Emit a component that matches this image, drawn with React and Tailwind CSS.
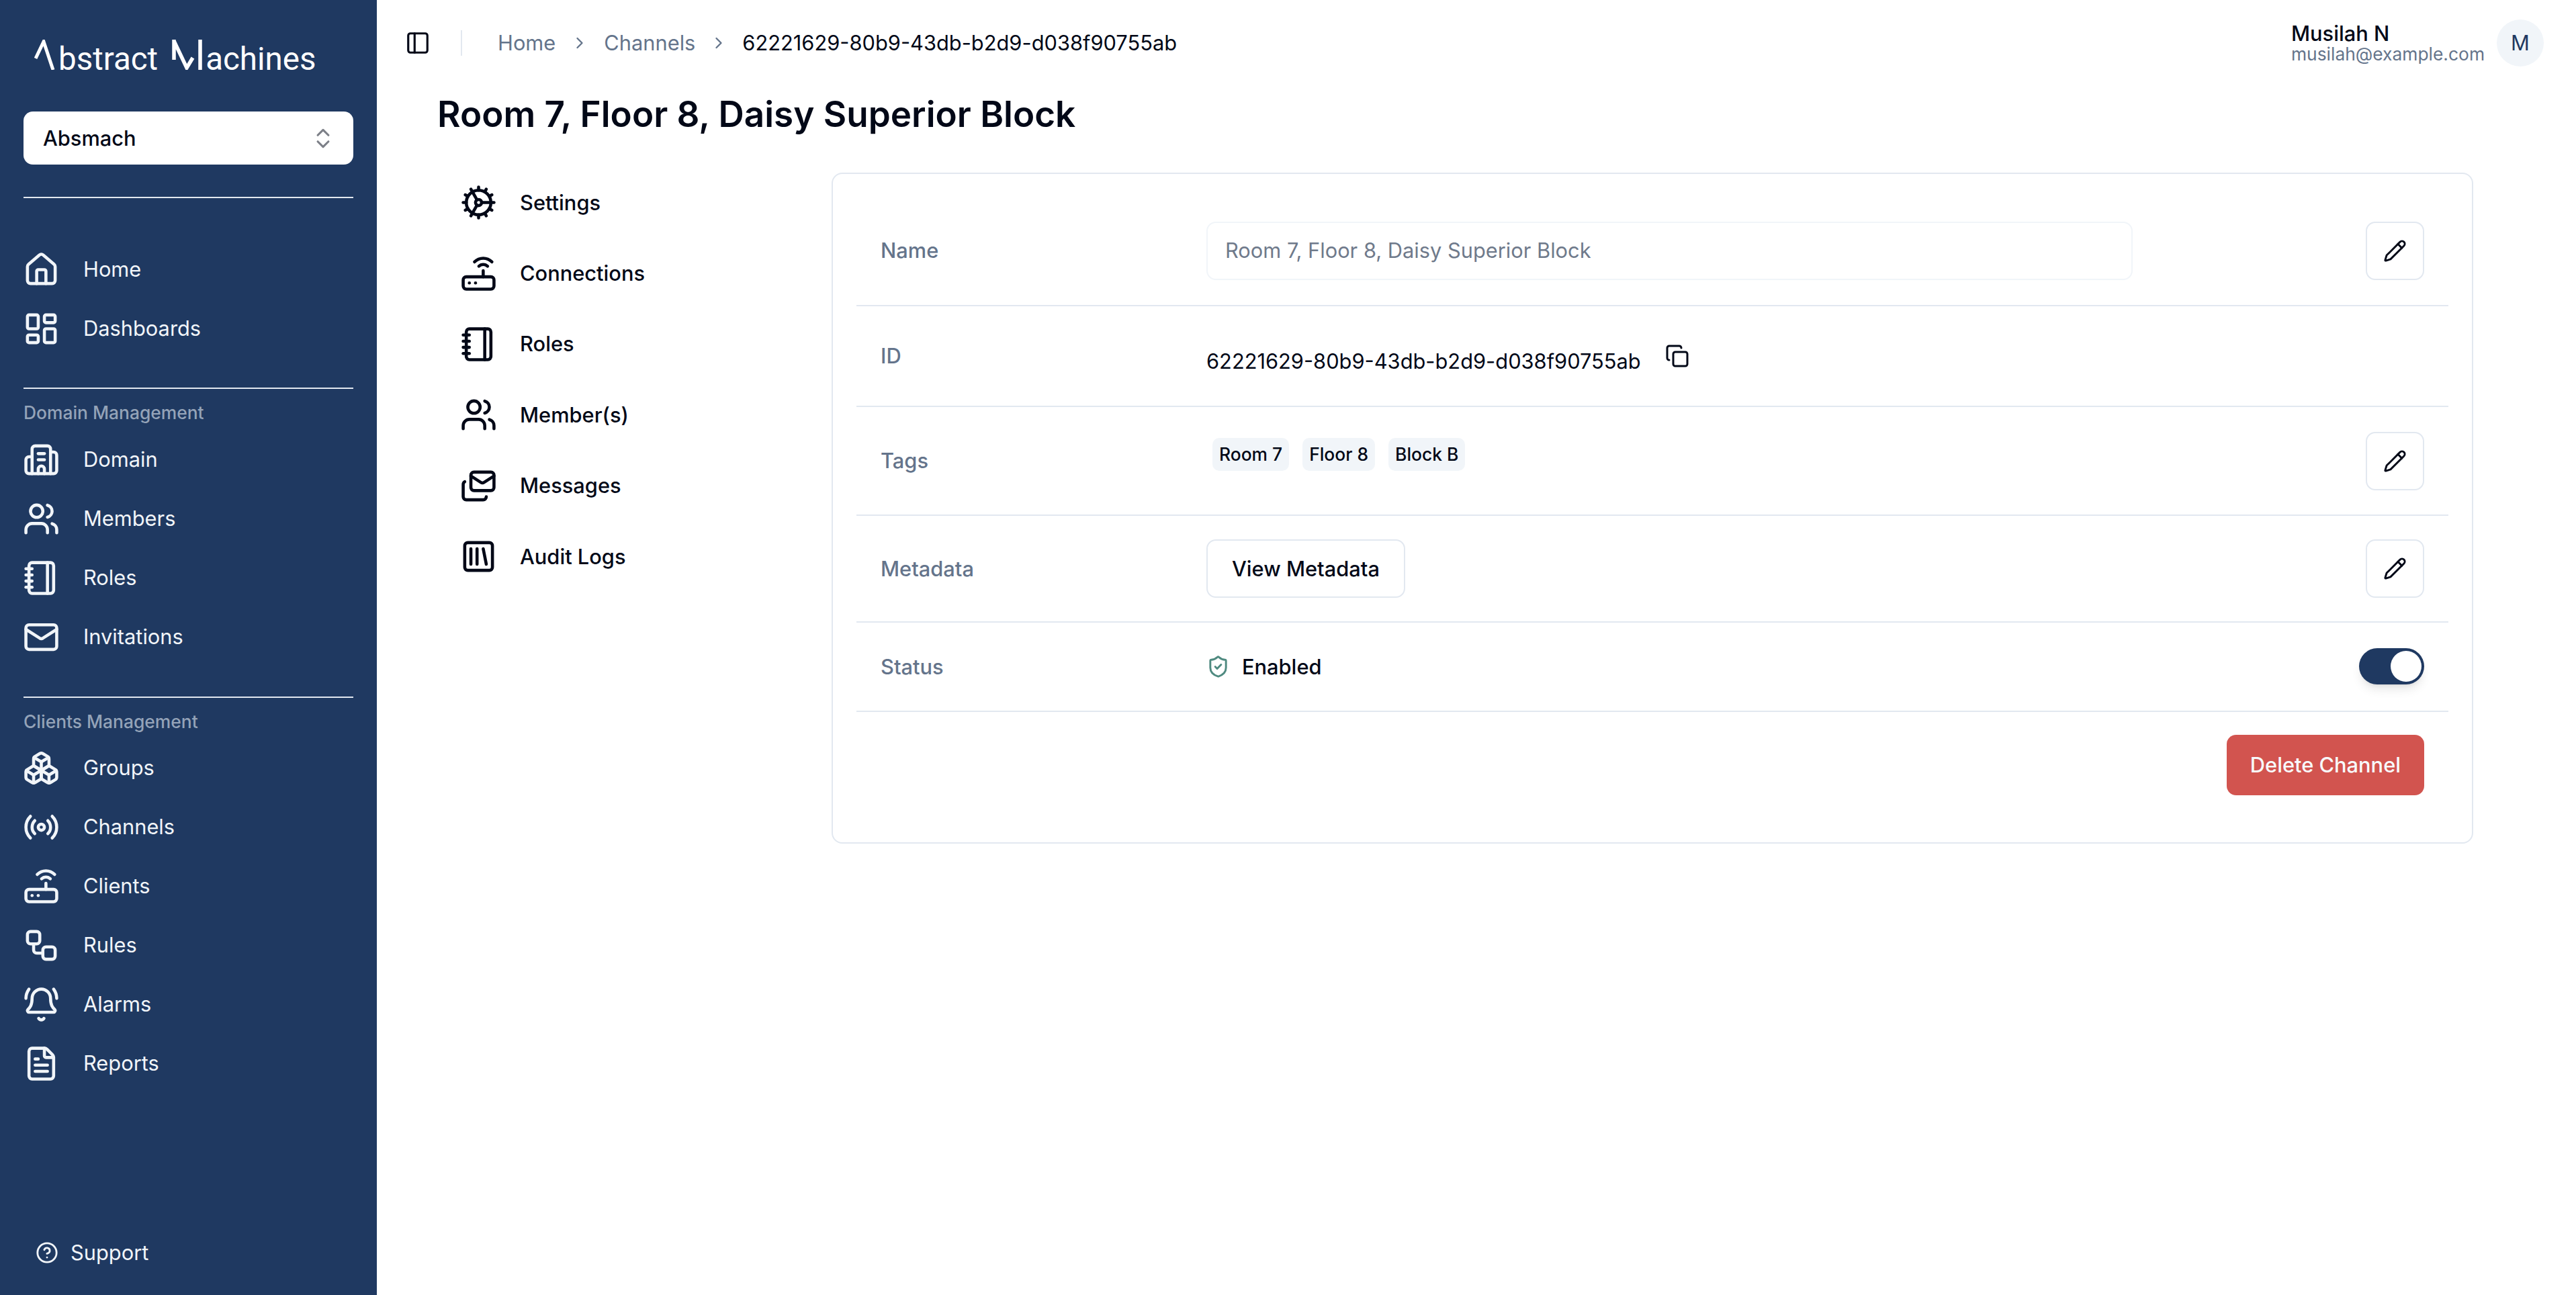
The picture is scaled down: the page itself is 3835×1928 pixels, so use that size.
import React from 'react';
import {
  House, LayoutDashboard, Building2, Users, Notebook, Mail, Boxes, Radio, Router, Workflow,
  BellRing, FileText, CircleHelp, ChevronsUpDown, PanelLeft, ChevronRight, Cog, Mails,
  SquareLibrary, Pencil, Copy, ShieldCheck,
} from 'lucide-react';

const NavItem = ({ icon: Icon, label }) => (
  <div className="flex h-[88px] items-center gap-[35px] -ml-[1px]">
    <Icon className="w-[55px] h-[55px] shrink-0" strokeWidth={2} />
    <span>{label}</span>
  </div>
);

const TabItem = ({ icon: Icon, label }) => (
  <div className="flex h-[105.4px] items-center gap-[34px] font-medium">
    <Icon className="w-[55px] h-[55px] shrink-0" strokeWidth={2} />
    <span>{label}</span>
  </div>
);

const EditButton = () => (
  <button className="flex w-[87px] h-[87px] items-center justify-center rounded-[14px] border-2 border-[#e2e8f0] bg-white">
    <Pencil className="w-[35px] h-[35px]" strokeWidth={2} />
  </button>
);

const Row = ({ label, className, children, action }) => (
  <div className={`flex items-center border-b-2 border-[#e2e8f0] pl-[36px] pr-[36px] ${className}`}>
    <div className="w-[485px] shrink-0 font-medium text-[#64748b]">{label}</div>
    <div className="flex-1 min-w-0">{children}</div>
    {action}
  </div>
);

const Tag = ({ children }) => (
  <span className="flex h-[49px] items-center rounded-[10px] bg-[#f1f5f9] px-[10px] text-[26.4px] font-medium">{children}</span>
);

const Logo = () => (
  <div className="flex h-[60px] items-baseline pl-[16px] text-[47.5px] leading-[60px] font-normal font-['Roboto',sans-serif] text-white">
    <svg className="w-[31px] h-[45px] shrink-0" viewBox="0 0 31 45" fill="none" stroke="currentColor" strokeWidth="5">
      <path d="M2 28 L14 3 L28 45" />
    </svg>
    <span className="ml-[5px]">bstract</span>
    <svg className="ml-[21px] w-[45px] h-[45px] shrink-0" viewBox="0 0 45 45" fill="none" stroke="currentColor" strokeWidth="5.5">
      <path d="M3 0 V30 M3 2 L22 42 L31 27 M42 0 V45" />
    </svg>
    <span className="ml-[5px]">achines</span>
  </div>
);

const Sidebar = () => (
  <div className="flex w-[561px] h-[1928px] shrink-0 flex-col bg-[#1f3961] px-[35px] text-[#f1f5f9]">
    <div className="pt-[58px]">
      <Logo />
    </div>
    <div className="mt-[48px] flex h-[79px] items-center justify-between rounded-[14px] bg-white pl-[29px] pr-[26px] font-medium text-[#020817]">
      <span>Absmach</span>
      <ChevronsUpDown className="w-[38px] h-[38px] text-[#7d8088]" strokeWidth={2} />
    </div>
    <div className="mt-[48px] h-[2px] bg-[#e2e8f0]" />
    <div className="mt-[62px]">
      <NavItem icon={House} label="Home" />
      <NavItem icon={LayoutDashboard} label="Dashboards" />
    </div>
    <div className="mt-[44px] h-[2px] bg-[#e2e8f0]" />
    <div className="mt-[15px] h-[40px] text-[26.4px] leading-[40px] font-medium text-[#94a3b8]">Domain Management</div>
    <div className="mt-[6px]">
      <NavItem icon={Building2} label="Domain" />
      <NavItem icon={Users} label="Members" />
      <NavItem icon={Notebook} label="Roles" />
      <NavItem icon={Mail} label="Invitations" />
    </div>
    <div className="mt-[45px] h-[2px] bg-[#e2e8f0]" />
    <div className="mt-[15px] h-[40px] text-[26.4px] leading-[40px] font-medium text-[#94a3b8]">Clients Management</div>
    <div className="mt-[5px]">
      <NavItem icon={Boxes} label="Groups" />
      <NavItem icon={Radio} label="Channels" />
      <NavItem icon={Router} label="Clients" />
      <NavItem icon={Workflow} label="Rules" />
      <NavItem icon={BellRing} label="Alarms" />
      <NavItem icon={FileText} label="Reports" />
    </div>
    <div className="mt-auto mb-[39px] flex h-[48px] items-center gap-[18px] pl-[18px]">
      <CircleHelp className="w-[34px] h-[34px]" strokeWidth={2} />
      <span>Support</span>
    </div>
  </div>
);

const Header = () => (
  <div className="flex h-[128px] items-center pl-[42px] pr-[48px]">
    <PanelLeft className="w-[38px] h-[38px] text-[#020817]" strokeWidth={2} />
    <div className="ml-[45px] mr-[53px] w-[2px] h-[38px] bg-[#e2e8f0]" />
    <span className="text-[#64748b]">Home</span>
    <ChevronRight className="mx-[22px] w-[28px] h-[28px] text-[#64748b]" strokeWidth={2} />
    <span className="text-[#64748b]">Channels</span>
    <ChevronRight className="mx-[21px] w-[28px] h-[28px] text-[#64748b]" strokeWidth={2} />
    <span>62221629-80b9-43db-b2d9-d038f90755ab</span>
    <div className="ml-auto flex items-center gap-[18px]">
      <div className="flex flex-col">
        <span className="text-[30.8px] leading-[32px] font-medium">Musilah N</span>
        <span className="text-[26.4px] leading-[28px] text-[#64748b]">musilah@example.com</span>
      </div>
      <div className="flex w-[70px] h-[70px] items-center justify-center rounded-full bg-[#f1f5f9] text-[#1f3961]">M</div>
    </div>
  </div>
);

const Card = () => (
  <div className="mt-[8px] flex-1 h-[999px] rounded-[16px] border-2 border-[#e2e8f0] px-[35px]">
    <Row label="Name" className="h-[197px] pt-[33px]" action={<EditButton />}>
      <div className="flex w-[1379px] h-[87px] items-center rounded-[14px] border-2 border-[#f1f5f9] px-[26px] text-[#6f7a8b]">
        Room 7, Floor 8, Daisy Superior Block
      </div>
    </Row>
    <Row label="ID" className="h-[150px]">
      <div className="flex items-center gap-[36px]">
        <span className="pt-[16px]">62221629-80b9-43db-b2d9-d038f90755ab</span>
        <Copy className="w-[36px] h-[36px]" strokeWidth={2} />
      </div>
    </Row>
    <Row label="Tags" className="h-[162px]" action={<EditButton />}>
      <div className="flex gap-[20px] pl-[9px] pb-[20px]">
        <Tag>Room 7</Tag>
        <Tag>Floor 8</Tag>
        <Tag>Block B</Tag>
      </div>
    </Row>
    <Row label="Metadata" className="h-[159px]" action={<EditButton />}>
      <button className="flex h-[87px] items-center rounded-[14px] border-2 border-[#e2e8f0] bg-white px-[36px] font-medium">
        View Metadata
      </button>
    </Row>
    <Row
      label="Status"
      className="h-[133px]"
      action={
        <div className="-mt-[2px] flex w-[97px] h-[54px] items-center justify-end rounded-full bg-[#1f3961] pr-[4px] shadow-lg">
          <div className="w-[46px] h-[46px] rounded-full bg-white" />
        </div>
      }
    >
      <div className="flex items-center gap-[18px]">
        <ShieldCheck className="w-[35px] h-[35px] text-[#4f8a80]" strokeWidth={2} />
        <span className="font-medium">Enabled</span>
      </div>
    </Row>
    <div className="flex justify-end pt-[34px] pr-[36px]">
      <button className="flex h-[90px] items-center rounded-[14px] bg-[#d2544f] px-[35px] font-medium text-[#f8fafc]">
        Delete Channel
      </button>
    </div>
  </div>
);

export default function App() {
  return (
    <div className="flex w-[3835px] h-[1928px] overflow-hidden bg-white font-['Inter',sans-serif] text-[30.8px] leading-[48px] text-[#020817]">
      <Sidebar />
      <div className="flex flex-1 min-w-0 flex-col">
        <Header />
        <div className="pl-[90px] pr-[153px]">
          <h1 className="h-[84px] text-[53px] leading-[84px] font-semibold">Room 7, Floor 8, Daisy Superior Block</h1>
          <div className="mt-[37px] flex">
            <div className="w-[587px] shrink-0 pl-[34px]">
              <TabItem icon={Cog} label="Settings" />
              <TabItem icon={Router} label="Connections" />
              <TabItem icon={Notebook} label="Roles" />
              <TabItem icon={Users} label="Member(s)" />
              <TabItem icon={Mails} label="Messages" />
              <TabItem icon={SquareLibrary} label="Audit Logs" />
            </div>
            <Card />
          </div>
        </div>
      </div>
    </div>
  );
}
